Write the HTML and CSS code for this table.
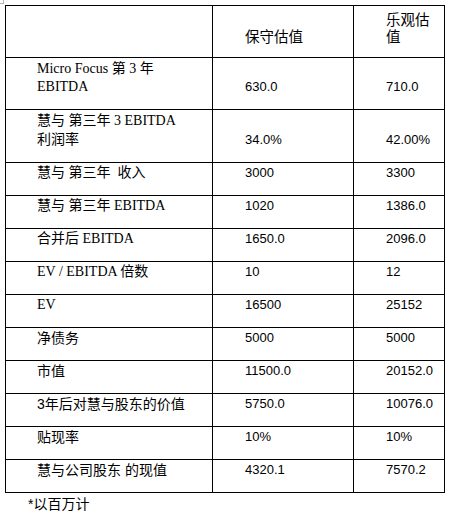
FILE: index.html
```html
<!DOCTYPE html>
<html lang="zh">
<head>
<meta charset="utf-8">
<title>估值</title>
<link rel="stylesheet" href="styles.css">
</head>
<body>
<div class="page">
  <table class="val">
    <colgroup><col class="c1"><col class="c2"><col class="c3"></colgroup>
    <tr class="head">
      <td></td>
      <td class="h">保守估值</td>
      <td class="h">乐观估值</td>
    </tr>
    <tr class="two">
      <td class="lbl">Micro Focus 第 3 年<br>EBITDA</td>
      <td class="num">630.0</td>
      <td class="num">710.0</td>
    </tr>
    <tr class="two tall">
      <td class="lbl">慧与 第三年 3 EBITDA<br>利润率</td>
      <td class="num">34.0%</td>
      <td class="num">42.00%</td>
    </tr>
    <tr><td class="lbl">慧与 第三年&nbsp;&nbsp;收入</td><td class="num">3000</td><td class="num">3300</td></tr>
    <tr><td class="lbl">慧与 第三年 EBITDA</td><td class="num">1020</td><td class="num">1386.0</td></tr>
    <tr><td class="lbl">合并后 EBITDA</td><td class="num">1650.0</td><td class="num">2096.0</td></tr>
    <tr><td class="lbl">EV / EBITDA 倍数</td><td class="num">10</td><td class="num">12</td></tr>
    <tr><td class="lbl">EV</td><td class="num">16500</td><td class="num">25152</td></tr>
    <tr><td class="lbl sans">净债务</td><td class="num">5000</td><td class="num">5000</td></tr>
    <tr><td class="lbl sans">市值</td><td class="num">11500.0</td><td class="num">20152.0</td></tr>
    <tr><td class="lbl sans">3年后对慧与股东的价值</td><td class="num">5750.0</td><td class="num">10076.0</td></tr>
    <tr><td class="lbl sans">贴现率</td><td class="num">10%</td><td class="num">10%</td></tr>
    <tr><td class="lbl sans">慧与公司股东 的现值</td><td class="num">4320.1</td><td class="num">7570.2</td></tr>
  </table>
  <p class="note">*以百万计</p>
</div>
</body>
</html>
```
FILE: styles.css
```css
html, body {
  margin: 0;
  padding: 0;
  background: #fff;
}
.page {
  position: relative;
  padding: 5px 0 0 5px;
  width: 455px;
  height: 517px;
  color: #000;
}
.page::before {
  content: "";
  position: absolute;
  left: 0;
  top: 0;
  width: 3px;
  height: 3px;
  border-right: 1px solid #b5b5b5;
  border-bottom: 1px solid #b5b5b5;
}
.val {
  border-collapse: collapse;
  table-layout: fixed;
  width: 439px;
}
.c1 { width: 207px; }
.c2 { width: 141px; }
.c3 { width: 91px; }
.val td {
  border: 1px solid #000;
  padding: 1px 4px 13px 31px;
  line-height: 18px;
  vertical-align: top;
  font-size: 14px;
  font-family: "Liberation Serif", "Noto Sans CJK SC", serif;
}
.val td.num,
.val td.h {
  padding-left: 32px;
  vertical-align: bottom;
}
.val tr.head td {
  padding-top: 4px;
  line-height: 17px;
}
.val td.h {
  font-family: "Noto Sans CJK SC", sans-serif;
  font-size: 14.5px;
}
.val td.num {
  font-family: "Liberation Sans", "DejaVu Sans", sans-serif;
  font-size: 13px;
}
.val td.sans {
  font-family: "Liberation Sans", "Noto Sans CJK SC", sans-serif;
}
.val tr.two td.lbl {
  padding-top: 2px;
}
.val tr.tall td.lbl {
  padding-top: 1px;
  line-height: 19px;
}
.note {
  margin: 2px 0 0 23px;
  font-size: 14px;
  line-height: 18px;
  font-family: "Liberation Sans", "Noto Sans CJK SC", sans-serif;
}
```
